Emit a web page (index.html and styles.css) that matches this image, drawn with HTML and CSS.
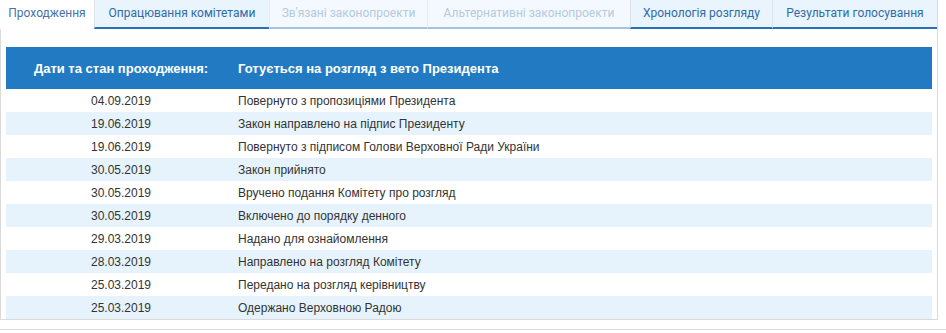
FILE: index.html
```html
<!DOCTYPE html>
<html lang="uk">
<head>
<meta charset="utf-8">
<title>Проходження</title>
<link rel="stylesheet" href="styles.css">
</head>
<body>
<div class="page">
  <nav class="tabs">
    <a class="tab tab-1 active">Проходження</a>
    <a class="tab tab-2">Опрацювання комітетами</a>
    <a class="tab tab-3 disabled">Зв'язані законопроекти</a>
    <a class="tab tab-4 disabled">Альтернативні законопроекти</a>
    <a class="tab tab-5">Хронологія розгляду</a>
    <a class="tab tab-6">Результати голосування</a>
  </nav>
  <section class="panel">
    <table class="flow">
      <thead>
        <tr>
          <th class="col-date">Дати та стан проходження:</th>
          <th class="col-event">Готується на розгляд з вето Президента</th>
        </tr>
      </thead>
      <tbody>
        <tr><td class="col-date">04.09.2019</td><td class="col-event">Повернуто з пропозиціями Президента</td></tr>
        <tr><td class="col-date">19.06.2019</td><td class="col-event">Закон направлено на підпис Президенту</td></tr>
        <tr><td class="col-date">19.06.2019</td><td class="col-event">Повернуто з підписом Голови Верховної Ради України</td></tr>
        <tr><td class="col-date">30.05.2019</td><td class="col-event">Закон прийнято</td></tr>
        <tr><td class="col-date">30.05.2019</td><td class="col-event">Вручено подання Комітету про розгляд</td></tr>
        <tr><td class="col-date">30.05.2019</td><td class="col-event">Включено до порядку денного</td></tr>
        <tr><td class="col-date">29.03.2019</td><td class="col-event">Надано для ознайомлення</td></tr>
        <tr><td class="col-date">28.03.2019</td><td class="col-event">Направлено на розгляд Комітету</td></tr>
        <tr><td class="col-date">25.03.2019</td><td class="col-event">Передано на розгляд керівництву</td></tr>
        <tr><td class="col-date">25.03.2019</td><td class="col-event">Одержано Верховною Радою</td></tr>
      </tbody>
    </table>
  </section>
  <div class="rule"></div>
</div>
</body>
</html>
```
FILE: styles.css
```css
* { box-sizing: border-box; }
html, body { margin: 0; padding: 0; background: #fff; }
body { font-family: "Liberation Sans", Arial, sans-serif; font-size: 12px; color: #333; }

.page { width: 946px; }

.tabs {
  display: flex;
  width: 938px;
  height: 29px;
  border-right: 1px solid #dadada;
}
.tab {
  display: flex;
  align-items: center;
  justify-content: center;
  height: 29px;
  padding-bottom: 2px;
  font-family: Roboto, "Liberation Sans", sans-serif;
  font-size: 12px;
  color: #2f6ba8;
  background: #e9f4fd;
  border-bottom: 2px solid #2a72b3;
  border-left: 1px solid #dbe3ea;
  white-space: nowrap;
}
.tab.active {
  background: #fff;
  color: #4673a8;
  border-bottom: 2px solid #fff;
  border-left: none;
}
.tab.disabled {
  background: #f3f9fe;
  color: #b4cadd;
  border-bottom-color: #a5c3de;
  border-left-color: #e6ecf1;
}
.tab-1 { width: 94px; }
.tab-2 { width: 175px; }
.tab-3 { width: 158px; }
.tab-4 { width: 203px; }
.tab-5 { width: 142px; }
.tab-6 { width: 165px; }

.panel {
  width: 938px;
  padding: 18px 4px 0 5px;
  border-left: 1px solid #dadada;
  border-right: 1px solid #dadada;
  border-bottom: 1px solid #dadada;
}

.flow {
  width: 926px;
  border-collapse: collapse;
}
.flow th {
  height: 42px;
  background: #227bc2;
  color: #fff;
  font-weight: bold;
  font-size: 13px;
  padding: 0;
}
.flow td {
  height: 23px;
  padding: 1px 0 0;
}
.flow tbody tr:nth-child(even) td { background: #e6f3fc; }
.col-date { width: 230px; text-align: center; }
.col-event { text-align: left; padding-left: 2px !important; }

.rule {
  margin-top: 9px;
  height: 1px;
  background: #dadada;
}
```
